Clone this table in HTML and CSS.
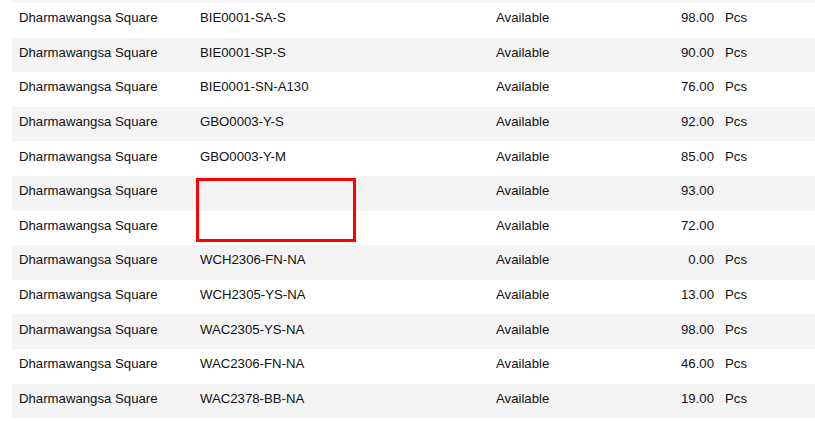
FILE: index.html
```html
<!DOCTYPE html>
<html lang="en">
<head>
    <meta charset="UTF-8">
    <meta name="viewport" content="width=device-width, initial-scale=1.0">
    <title>Stock List</title>
    <link rel="stylesheet" href="styles.css">
</head>
<body>
    <div class="viewport">
        <table class="stock">
            <colgroup>
                <col class="col-location">
                <col class="col-sku">
                <col class="col-status">
                <col class="col-qty">
                <col class="col-unit">
            </colgroup>
            <tbody>
                <tr><td></td><td></td><td></td><td></td><td></td></tr>
                <tr><td>Dharmawangsa Square</td><td>BIE0001-SA-S</td><td>Available</td><td class="qty">98.00</td><td>Pcs</td></tr>
                <tr><td>Dharmawangsa Square</td><td>BIE0001-SP-S</td><td>Available</td><td class="qty">90.00</td><td>Pcs</td></tr>
                <tr><td>Dharmawangsa Square</td><td>BIE0001-SN-A130</td><td>Available</td><td class="qty">76.00</td><td>Pcs</td></tr>
                <tr><td>Dharmawangsa Square</td><td>GBO0003-Y-S</td><td>Available</td><td class="qty">92.00</td><td>Pcs</td></tr>
                <tr><td>Dharmawangsa Square</td><td>GBO0003-Y-M</td><td>Available</td><td class="qty">85.00</td><td>Pcs</td></tr>
                <tr><td>Dharmawangsa Square</td><td class="marked"><span class="highlight"></span></td><td>Available</td><td class="qty">93.00</td><td></td></tr>
                <tr><td>Dharmawangsa Square</td><td></td><td>Available</td><td class="qty">72.00</td><td></td></tr>
                <tr><td>Dharmawangsa Square</td><td>WCH2306-FN-NA</td><td>Available</td><td class="qty">0.00</td><td>Pcs</td></tr>
                <tr><td>Dharmawangsa Square</td><td>WCH2305-YS-NA</td><td>Available</td><td class="qty">13.00</td><td>Pcs</td></tr>
                <tr><td>Dharmawangsa Square</td><td>WAC2305-YS-NA</td><td>Available</td><td class="qty">98.00</td><td>Pcs</td></tr>
                <tr><td>Dharmawangsa Square</td><td>WAC2306-FN-NA</td><td>Available</td><td class="qty">46.00</td><td>Pcs</td></tr>
                <tr><td>Dharmawangsa Square</td><td>WAC2378-BB-NA</td><td>Available</td><td class="qty">19.00</td><td>Pcs</td></tr>
            </tbody>
        </table>
    </div>
</body>
</html>
```

FILE: styles.css
```css
body {
    margin: 0;
    padding: 0;
    background: white;
    color: #111;
    font-family: "Liberation Sans", Arial, sans-serif;
    font-size: 13.2px;
}
.viewport {
    height: 421px;
    overflow: hidden;
}
.stock {
    margin: -31.6px 0 0 12px;
    width: calc(100% - 12px);
    border-collapse: collapse;
    table-layout: fixed;
}
.col-location {
    width: 181px;
}
.col-sku {
    width: 297px;
}
.col-status {
    width: 150px;
}
.col-qty {
    width: 80px;
}
.stock tr {
    height: 34.6px;
}
.stock tr:nth-child(odd) {
    background: #f4f4f4;
}
.stock td {
    padding: 0 7px 5px;
    white-space: nowrap;
    vertical-align: middle;
}
.stock td:nth-child(3) {
    padding-left: 6px;
}
.stock td.qty {
    text-align: right;
    padding-right: 6px;
}
.stock td:nth-child(5) {
    padding-left: 5px;
}
.marked {
    position: relative;
}
.highlight {
    position: absolute;
    left: 3px;
    top: 2px;
    width: 154px;
    height: 58px;
    border: 3px solid #ff0000;
}
```
